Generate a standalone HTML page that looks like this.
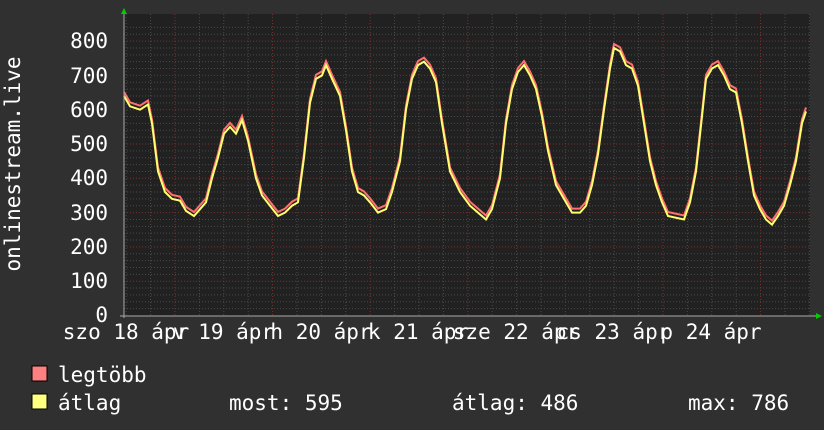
<!DOCTYPE html>
<html><head><meta charset="utf-8"><style>
html,body{margin:0;padding:0;background:#303030;}
svg{display:block}
text{font-family:"DejaVu Sans Mono","Liberation Mono",monospace;fill:#fff;}
</style></head><body>
<svg id="g" width="824" height="430" xmlns="http://www.w3.org/2000/svg">
<rect x="0" y="0" width="824" height="430" fill="#303030"/>
<rect x="124" y="14" width="686" height="302" fill="#212121"/>
<g id="grid"></g>
<g id="data"></g>
<line x1="120" y1="316" x2="816" y2="316" stroke="#aaa" stroke-width="1"/>
<line x1="124" y1="12" x2="124" y2="318" stroke="#aaa" stroke-width="1"/>
<polygon points="121,14 127,14 124,8" fill="#0c0"/>
<polygon points="816,313 816,319 822,316" fill="#0c0"/>
<g font-size="21" text-anchor="end">
<text x="108" y="48">800</text><text x="108" y="83">700</text><text x="108" y="117">600</text>
<text x="108" y="151">500</text><text x="108" y="185">400</text><text x="108" y="220">300</text>
<text x="108" y="254">200</text><text x="108" y="288">100</text><text x="108" y="322">0</text>
</g>
<text transform="translate(20,164) rotate(-90)" font-size="21" text-anchor="middle">onlinestream.live</text>
<g id="xl" font-size="21" text-anchor="middle"></g>
<rect x="32" y="366" width="15" height="15" fill="#ff8080" stroke="#000"/>
<rect x="32" y="394" width="15" height="15" fill="#ffff80" stroke="#000"/>
<g font-size="21">
<text x="58" y="382">legtöbb</text>
<text x="58" y="410">átlag</text>
<text x="229" y="410">most: 595</text>
<text x="452" y="410">átlag: 486</text>
<text x="688" y="410">max: 786</text>
</g>
</svg>
<script>
var NS="http://www.w3.org/2000/svg",grid=document.getElementById("grid"),data=document.getElementById("data"),xl=document.getElementById("xl");
function el(p,t,a){var e=document.createElementNS(NS,t);for(var k in a)e.setAttribute(k,a[k]);p.appendChild(e);return e;}
function Y(v){return 315.5-v*0.343;}
for(var v=20;v<=840;v+=20){var y=Y(v);if(y<14)break;var maj=v%100==0;
el(grid,"line",{x1:124,x2:810,y1:y,y2:y,stroke:maj?"#7a3030":"#4a4a4a","stroke-dasharray":"1,2"});}
for(var i=-3;i<28;i++){var x=175+24.4*i;if(x<=124||x>810)continue;var maj=(i%4==0);
el(grid,"line",{x1:x,x2:x,y1:14,y2:316,stroke:maj?"#7a3030":"#4a4a4a","stroke-dasharray":"1,2"});}
var labs=["szo 18 ápr","v 19 ápr","h 20 ápr","k 21 ápr","sze 22 ápr","cs 23 ápr","p 24 ápr"];
for(var i=0;i<labs.length;i++){var t=el(xl,"text",{x:126+97.5*i,y:339});t.textContent=labs[i];}
var P=[124,640,130,610,140,600,148,615,152,560,158,420,165,360,172,340,180,335,186,305,194,290,200,310,206,330,212,400,218,460,224,530,230,550,236,530,242,570,248,510,256,400,262,350,270,320,278,290,285,300,292,320,298,330,304,460,310,620,316,690,322,700,326,730,332,690,340,640,346,540,352,420,358,360,364,350,370,330,378,300,386,310,392,360,400,450,406,600,412,690,418,730,424,740,430,720,436,680,442,560,450,420,460,360,470,320,478,300,486,280,492,310,500,400,506,560,512,660,518,710,524,730,530,700,536,660,542,580,548,480,556,380,564,340,572,300,580,300,586,320,592,380,598,470,604,600,610,720,614,780,620,770,626,730,632,720,638,670,644,560,650,450,656,380,662,330,668,290,676,285,684,280,690,330,696,420,702,580,706,690,712,720,718,730,724,700,730,660,736,650,742,560,748,450,754,350,760,310,766,280,772,265,778,290,784,320,790,380,796,450,802,560,806,595];
function pts(off){var s="";for(var i=0;i<P.length;i+=2){s+=P[i]+","+(Y(P[i+1])-off)+" ";}return s;}
el(data,"polyline",{points:pts(4),fill:"none",stroke:"#ff7070","stroke-width":2});
el(data,"polyline",{points:pts(0),fill:"none",stroke:"#ffff70","stroke-width":2});
</script>
</body></html>
